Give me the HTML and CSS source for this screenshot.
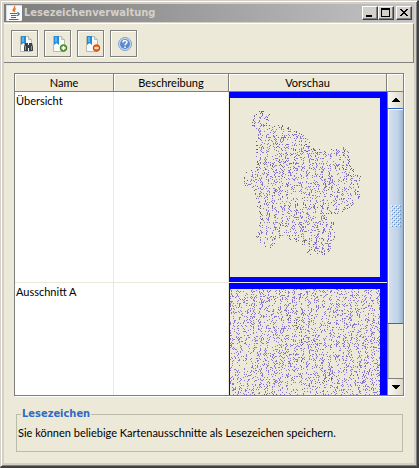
FILE: index.html
```html
<!DOCTYPE html>
<html lang="de">
<head>
<meta charset="utf-8">
<title>Lesezeichenverwaltung</title>
<link rel="stylesheet" href="styles.css">
</head>
<body>
<svg class="defs" aria-hidden="true">
  <symbol id="page" viewBox="0 0 16 16">
    <path d="M1.500.5h8l3 3v12h-11z" fill="#fbfbf8" stroke="#b9b9b2"/>
    <path d="M9.500.5v3h3" fill="#e4e4df" stroke="#b9b9b2"/>
    <path d="M2 0h5v9L4.500 7 2 9z" fill="#258bd5"/>
    <path d="M3 1h2v5H3z" fill="#58b3ee"/>
  </symbol>
</svg>
<div class="window">
  <header class="titlebar">
    <svg class="java" viewBox="0 0 16 16" aria-hidden="true">
      <rect width="16" height="16" rx="1" fill="#fafafa"/>
      <path d="M.5 15.500V.5h15" fill="none" stroke="#d5dce2"/>
      <path d="M8.500 1c1.500 2-3 3-1 5.500M10 3.500c-2 1-2 2-1 3.500" fill="none" stroke="#e76f1b" stroke-width="1.300"/>
      <path d="M4 8.500h7M5 10.500h5.500M5 12.500h5M11 8c3-.5 2.500 2 0 2.500M3 14.500h9.500" fill="none" stroke="#3c6e9b" stroke-width="1.200"/>
    </svg>
    <h1>Lesezeichenverwaltung</h1>
    <div class="controls">
      <button type="button" aria-label="Minimieren"><svg viewBox="0 0 12 10"><path d="M2 7h6v2H2z"/></svg></button>
      <button type="button" aria-label="Maximieren"><svg viewBox="0 0 12 10"><path d="M1 0h9v9H1zM2 2v6h7V2z" fill-rule="evenodd"/></svg></button>
      <button type="button" class="close" aria-label="Schließen"><svg viewBox="0 0 12 10"><path d="M2 1h2v1h1v1h2V2h1V1h2v1H9v1H8v1H7v1h1v1h1v1h1v1H8V7H7V6H5v1H4v1H2V7h1V6h1V5h1V4H4V3H3V2H2z"/></svg></button>
    </div>
  </header>
  <nav class="toolbar">
    <button type="button" aria-label="Lesezeichen anzeigen"><svg viewBox="0 0 16 16">
      <use href="#page" width="16" height="16"/>
      <path d="M6 7h3v2h1V7h3l1 4v4h-4v-3H9v3H5v-4z" fill="#39414a"/>
      <path d="M6 10h1v4H6zM12 10h1v4h-1z" fill="#8b99a6"/>
    </svg></button>
    <button type="button" aria-label="Lesezeichen hinzufügen"><svg viewBox="0 0 16 16">
      <use href="#page" width="16" height="16"/>
      <circle cx="11.500" cy="12" r="3.300" fill="#66a53a" stroke="#3d7d20"/>
      <path d="M11.500 10v4M9.500 12h4" stroke="#fff" stroke-width="1.500"/>
    </svg></button>
    <button type="button" aria-label="Lesezeichen entfernen"><svg viewBox="0 0 16 16">
      <use href="#page" width="16" height="16"/>
      <circle cx="11.500" cy="12" r="3.300" fill="#ee7026" stroke="#c44a12"/>
      <path d="M9.500 12h4" stroke="#fff" stroke-width="1.500"/>
    </svg></button>
    <button type="button" aria-label="Hilfe"><svg viewBox="1 0 16 16">
      <circle cx="8" cy="8" r="6.500" fill="#c9dbef" stroke="#7da2d2"/>
      <circle cx="8" cy="8" r="5" fill="#5c8bc9"/>
      <path d="M6 6.500C6 4 10 4 10 6.300 10 7.800 8 7.700 8 9.300M8 10.400v1.600" fill="none" stroke="#fff" stroke-width="1.500"/>
    </svg></button>
  </nav>
  <main>
    <section class="pane">
      <div class="view">
        <table>
          <thead><tr><th class="name">Name</th><th class="desc">Beschreibung</th><th>Vorschau</th></tr></thead>
          <tbody>
            <tr><td>Übersicht</td><td></td><td class="preview"><svg class="map" data-map="overview" viewBox="0 0 150 179"></svg></td></tr>
            <tr><td>Ausschnitt A</td><td></td><td class="preview"><svg class="map" data-map="detail" viewBox="0 0 150 179"></svg></td></tr>
          </tbody>
        </table>
      </div>
      <div class="scroll">
        <div class="corner"></div>
        <button type="button" aria-label="Nach oben"><svg viewBox="0 0 8 4"><path d="M3 0h2v1h1v1h1v1h1v1H0V3h1V2h1V1h1z"/></svg></button>
        <div class="track"><div class="thumb"><svg viewBox="0 0 10 22"><defs>
          <pattern id="grip" width="4" height="4" patternUnits="userSpaceOnUse"><path d="M0 0h1v1H0zM2 2h1v1H2z" fill="#fff"/><path d="M1 1h1v1H1zM3 3h1v1H3z" fill="#5c8cc8"/></pattern></defs>
          <rect width="10" height="22" fill="url(#grip)"/></svg></div></div>
        <button type="button" aria-label="Nach unten"><svg viewBox="0 0 8 4"><path d="M0 0h8v1H7v1H6v1H5v1H3V3H2V2H1V1H0z"/></svg></button>
      </div>
    </section>
    <fieldset>
      <legend>Lesezeichen</legend>
      <p>Sie können beliebige Kartenausschnitte als Lesezeichen speichern.</p>
    </fieldset>
  </main>
</div>
<script src="map.js"></script>
</body>
</html>
```
FILE: styles.css
```css
* { box-sizing: border-box; }
body {
  margin: 0;
  font: 11px/14px Lato, Tahoma, sans-serif;
  color: #000;
  background: #ece9d8;
}
button { padding: 0; margin: 0; font: inherit; border: 0; border-radius: 0; }
svg { display: block; }
.defs { position: absolute; width: 0; height: 0; }
.window {
  display: flex;
  flex-direction: column;
  height: 100vh;
  padding: 2px;
  border: 1px solid #d4d0c8;
  border-right: 2px solid #404040;
  border-bottom: 2px solid #404040;
  background: #d4d0c8;
  box-shadow: inset 1px 1px #fff, inset -1px -1px #808080;
}
.titlebar {
  display: flex;
  align-items: center;
  flex: none;
  height: 18px;
  margin: 1px 1px 0;
  padding: 0 2px;
  gap: 2px;
  background: linear-gradient(90deg, #7c7c7c, #c4c4c4);
}
.java { width: 16px; height: 16px; }
h1 {
  flex: 1;
  margin: 0;
  font: bold 11px/18px "DejaVu Sans Condensed", Tahoma, sans-serif;
  color: #d4d0c8;
}
.controls { display: flex; }
.controls button {
  width: 16px;
  height: 14px;
  padding: 1px;
  background: #d4d0c8;
  border: 1px solid;
  border-color: #fff #404040 #404040 #fff;
  box-shadow: inset -1px -1px #808080;
}
.controls svg { width: 12px; height: 10px; }
.controls .close { margin-left: 2px; }
.toolbar {
  display: flex;
  flex: none;
  gap: 6px;
  height: 40px;
  margin: 1px 1px 0;
  padding: 6px 7px;
  background: #ece9d8;
  border-top: 1px solid #fff;
  border-right: 1px solid #808080;
  border-bottom: 1px solid #808080;
}
.toolbar button {
  width: 27px;
  height: 27px;
  padding: 5px 7px;
  background: #ece9d8;
  border: 1px solid #808080;
  box-shadow: inset 1px 1px #fff, 1px 1px #fff;
}
.toolbar svg { width: 16px; height: 16px; }
main {
  display: flex;
  flex: 1;
  flex-direction: column;
  gap: 11px;
  min-height: 0;
  margin: 0 1px 1px;
  padding: 10px 10px 11px;
  background: #ece9d8;
}
.pane {
  display: flex;
  flex: 1;
  min-height: 0;
  border: 1px solid #808080;
  box-shadow: 1px 1px #fff;
}
.view { flex: 1; overflow: hidden; background: #fff; }
table { width: 100%; border-collapse: separate; border-spacing: 0; table-layout: fixed; }
th {
  height: 18px;
  padding: 0;
  font-weight: normal;
  background: #ece9d8;
  border-right: 1px solid #808080;
  border-bottom: 1px solid #808080;
  box-shadow: inset 1px 1px #fff;
}
.name { width: 99px; }
.desc { width: 115px; }
td {
  padding: 2px 1px;
  vertical-align: top;
  border-right: 1px solid #ece9d8;
  border-bottom: 1px solid #ece9d8;
}
td.preview { padding: 6px 7px 5px 1px; border-right: 0; background: #00f; background-clip: padding-box; }
.map { width: 100%; background: #ece9d8; }
.scroll { display: flex; flex: none; flex-direction: column; width: 16px; background: #ece9d8; }
.corner { height: 18px; border-bottom: 1px solid #808080; box-shadow: inset 1px 1px #fff; }
.scroll button {
  display: grid;
  place-items: center;
  height: 16px;
  background: linear-gradient(90deg, #faf9f4, #ddd9c8);
  border-left: 1px solid #808080;
}
.scroll button svg { width: 8px; height: 4px; }
.track { flex: 1; min-height: 0; border-left: 1px solid #808080; border-bottom: 1px solid #808080; background: #ece9d8; box-shadow: inset 1px 0 #c5c2b2; }
.thumb {
  display: grid;
  place-items: center;
  height: 80%;
  margin-left: -1px;
  border: solid #316ac5;
  border-width: 1px 0 1px 1px;
  background: linear-gradient(90deg, #d5e1ee, #c1d3e7 65%, #9db4d0);
  box-shadow: inset 1px 1px #fff;
}
.thumb svg { width: 10px; height: 22px; }
fieldset {
  flex: none;
  min-width: 0;
  margin: 0 1px 0 2px;
  padding: 5px 1px 11px;
  border: 1px solid #bbbbaa;
}
legend { margin-left: 3px; padding: 0 1px; font: bold 11px/14px "DejaVu Sans Condensed", Tahoma, sans-serif; color: #316ac5; }
p { margin: 0; white-space: nowrap; }
```
FILE: map.js
```js
// Draws the stippled survey points of each map preview.
const outline = [[28,14],[38,15],[37,25],[40,29],[54,28],[64,33],[73,37],[78,45],[81,51],[95,53],
  [112,49],[117,55],[119,67],[123,74],[129,79],[129,88],[127,102],[120,107],[113,111],[103,115],
  [94,114],[95,120],[102,125],[104,135],[102,149],[95,155],[90,155],[83,151],[79,155],[75,146],
  [63,140],[57,139],[45,138],[41,150],[33,147],[27,138],[31,125],[30,112],[25,99],[23,89],
  [16,88],[12,78],[20,72],[27,67],[27,52],[26,35],[22,22]];
const roads = {
  overview: [[[48,38],[46,52],[52,72],[56,94],[67,107],[90,108]], [[95,85],[100,95],[104,113]], [[55,128],[67,140],[80,144]]],
  detail: [[[40,2],[50,22],[66,34],[72,50],[70,72]], [[150,79],[135,84],[110,87],[88,93],[67,101],[60,107],[30,105],[15,108]]]
};
function inside(x, y) {
  let hit = false;
  for (let i = 0, j = outline.length - 1; i < outline.length; j = i++) {
    const [ax, ay] = outline[i], [bx, by] = outline[j];
    if (ay > y !== by > y && x < (bx - ax) * (y - ay) / (by - ay) + ax) hit = !hit;
  }
  return hit;
}
function near(lines, x, y, d) {
  return lines.some(line => line.slice(1).some(([bx, by], i) => {
    const [ax, ay] = line[i], dx = bx - ax, dy = by - ay;
    const t = Math.max(0, Math.min(1, ((x - ax) * dx + (y - ay) * dy) / (dx * dx + dy * dy)));
    return Math.hypot(x - ax - t * dx, y - ay - t * dy) < d;
  }));
}
document.querySelectorAll("[data-map]").forEach(svg => {
  const kind = svg.dataset.map;
  let seed = 4711;
  const random = () => (seed = (seed * 16807) % 2147483647) / 2147483647;
  let violet = "", gray = "";
  for (let y = 0; y < 179; y++) {
    let last = false;
    for (let x = 0; x < 150; x++) {
      const r = random(), g = random();
      const edge = kind === "overview" && near([outline.concat([outline[0]])], x, y, 1.5);
      if (kind === "overview" && !edge && !inside(x, y)) { last = false; continue; }
      const wave = Math.sin((x + 1.5 * Math.sin(y / 6 + x / 11)) * Math.PI * 2 / 7);
      const dot = r < (last ? 0.12 : 0.19 + 0.14 * wave);
      const dark = near(roads[kind], x, y, 1.3) ? g < 0.7 : kind === "overview" && g < (edge ? 0.7 : 0.08);
      if (dot) {
        if (dark) gray += `M${x} ${y}h1v1h-1z`;
        else violet += `M${x} ${y}h1v1h-1z`;
      }
      last = dot;
    }
  }
  svg.innerHTML = `<g shape-rendering="crispEdges"><path fill="#8a76d2" d="${violet}"/><path fill="#69646b" d="${gray}"/></g>`;
});
```
